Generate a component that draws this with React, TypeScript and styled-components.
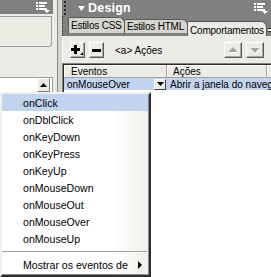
import styled, { createGlobalStyle } from "styled-components";

const GlobalStyle = createGlobalStyle`
  html, body {
    margin: 0;
    padding: 0;
    background: #ecebe5;
  }
`;

const Screen = styled.div`
  position: relative;
  width: 271px;
  height: 277px;
  overflow: hidden;
  display: flex;
  background: #ecebe5;
  font-family: "Liberation Sans", Arial, sans-serif;
  font-size: 10px;
  color: #000;
`;

/* ---------- left panel ---------- */

const LeftPanel = styled.div`
  width: 53px;
  padding-right: 4px;
  display: flex;
  flex-direction: column;
`;

const GrayHeader = styled.div`
  height: 14px;
  background: #808080;
  display: flex;
  align-items: center;
  justify-content: flex-end;
  padding-right: 3px;
  flex-shrink: 0;
`;

const PropBox = styled.div`
  margin-top: 2px;
  width: 51px;
  height: 29px;
  background: #ebeae3;
  border: 1px solid #9d9d9d;
  border-left: none;
  border-radius: 0 0 3px 0;
`;

const ListArea = styled.div`
  margin-top: 30px;
  flex: 1;
  background: #fff;
  border-top: 1px solid #9d9d9d;
  border-right: 1px solid #9d9d9d;
  display: flex;
  justify-content: flex-end;
  align-items: flex-start;
  padding-right: 2px;
`;

const ScrollButton = styled.div`
  width: 13px;
  height: 14px;
  box-sizing: border-box;
  background: #ecebe5;
  border: 1px solid;
  border-color: #fff #808080 #808080 #fff;
  display: flex;
  align-items: center;
  justify-content: center;
`;

const Splitter = styled.div`
  width: 4px;
  border-left: 1px solid #8a8a8a;
  background: #d6d5cf;
`;

/* ---------- right panel ---------- */

const RightPanel = styled.div`
  flex: 1;
  display: flex;
  flex-direction: column;
  min-width: 0;
`;

const DesignHeader = styled.div`
  height: 16px;
  background: #808080;
  display: flex;
  align-items: center;
  padding-right: 3px;
`;

const Grip = styled.div`
  width: 3px;
  height: 14px;
  margin-left: 2px;
  border-left: 2px dotted #2a2a2a;
`;

const Title = styled.div`
  display: flex;
  align-items: center;
  gap: 3px;
  margin-left: 9px;
  flex: 1;
  color: #fff;
  font-weight: bold;
  font-size: 12.5px;
  letter-spacing: 0.2px;
`;

const TabStrip = styled.div`
  height: 20px;
  background: #808080;
  display: flex;
  align-items: flex-start;
  padding-left: 5px;
  border-left: 1px dotted #2a2a2a;
  overflow: hidden;
`;

const Tab = styled.div<{ $top: number; $height: number; $w: number; $active?: boolean }>`
  flex-shrink: 0;
  width: ${({ $w }) => $w}px;
  margin-top: ${({ $top }) => $top}px;
  height: ${({ $height }) => $height}px;
  box-sizing: border-box;
  padding: ${({ $active }) => ($active ? "3px 0 0 2px" : "0 0 0 2px")};
  display: flex;
  align-items: center;
  white-space: nowrap;
  font-size: 10px;
  letter-spacing: -0.2px;
  background: ${({ $active }) => ($active ? "#ecebe5" : "#d5d4cd")};
  border: 1px solid #5a5a5a;
  border-bottom: none;
  border-radius: 2px 6px 0 0;
  margin-right: -1px;
`;

const TabMore = styled.div`
  flex-shrink: 0;
  margin-left: 2px;
  margin-top: 12px;
  width: 5px;
  height: 7px;
  border-top: 1px solid #333;
  border-bottom: 1px solid #333;
  box-shadow: inset 0 2px 0 #ecebe5, inset 0 3px 0 #333;
`;

const Content = styled.div`
  flex: 1;
  display: flex;
  flex-direction: column;
  background: #ecebe5;
  border-left: 1px solid #fff;
`;

const Toolbar = styled.div`
  height: 27px;
  box-sizing: border-box;
  padding: 6px 7px 0 7px;
  display: flex;
  align-items: flex-start;
`;

const ToolButton = styled.div<{ $w?: number; $last?: boolean }>`
  flex-shrink: 0;
  width: ${({ $w }) => $w ?? 15}px;
  height: 16px;
  box-sizing: border-box;
  background: #ecebe5;
  border: 1px solid;
  border-color: #fff #5c5c5c #5c5c5c #fff;
  box-shadow: inset -1px -1px 0 #a6a59e;
  display: flex;
  align-items: center;
  justify-content: center;
  margin-right: ${({ $last }) => ($last ? 0 : 4)}px;
`;

const TagLabel = styled.div`
  margin-left: 7px;
  height: 16px;
  display: flex;
  align-items: center;
  flex: 1;
  font-size: 10px;
`;

const Table = styled.div`
  flex: 1;
  display: flex;
  flex-direction: column;
  background: #fff;
  border-top: 1px solid #808080;
  border-left: 1px solid #808080;
  box-shadow: inset 1px 1px 0 #2b2b2b;
  padding: 1px 0 0 1px;
  margin-left: -1px;
`;

const HeaderRow = styled.div`
  height: 13px;
  display: flex;
  background: #ecebe5;
`;

const HeaderCell = styled.div<{ $w: number }>`
  width: ${({ $w }) => $w}px;
  flex-shrink: 0;
  box-sizing: border-box;
  border-right: 1px solid #a4a39c;
  border-bottom: 1px solid #a4a39c;
  box-shadow: inset 1px 1px 0 #fff;
  padding-left: ${({ $w }) => ($w > 100 ? 7 : 6)}px;
  display: flex;
  align-items: center;
  font-size: 10px;
`;

const EventRow = styled.div`
  height: 12px;
  display: flex;
  background: #c2d3ef;
  font-size: 10px;
`;

const EventCell = styled.div<{ $w?: number }>`
  width: ${({ $w }) => ($w ? `${$w}px` : "auto")};
  flex: ${({ $w }) => ($w ? "none" : "1")};
  min-width: 0;
  box-sizing: border-box;
  padding-left: 3px;
  display: flex;
  align-items: center;
  white-space: nowrap;
  overflow: hidden;
`;

const DropButton = styled.div`
  margin-left: auto;
  margin-right: 1px;
  width: 12px;
  height: 11px;
  box-sizing: border-box;
  background: #ecebe5;
  border: 1px solid;
  border-color: #fff #404040 #404040 #fff;
  display: flex;
  align-items: center;
  justify-content: center;
`;

/* ---------- popup menu ---------- */

const Menu = styled.div`
  position: absolute;
  left: 0;
  top: 92px;
  width: 151px;
  height: 185px;
  box-sizing: border-box;
  background: linear-gradient(to right, #fff 0%, #fff 75%, #f3f3ee 95%);
  border: 2px solid;
  border-color: #f3f2ec #303030 #303030 #f3f2ec;
  box-shadow: inset -1px -1px 0 #8a8a8a;
  display: flex;
  flex-direction: column;
  font-size: 10.6px;
`;

const MenuItem = styled.div<{ $active?: boolean }>`
  height: 17px;
  flex-shrink: 0;
  display: flex;
  align-items: center;
  padding-left: 21px;
  padding-right: 6px;
  margin-right: 1px;
  background: ${({ $active }) => ($active ? "#c2d3ef" : "transparent")};
`;

const Separator = styled.div`
  height: 1px;
  margin: 4px 2px 3px 0;
  background: #a0a0a0;
  border-bottom: 1px solid #fff;
`;

const SubArrow = styled.span`
  margin-left: auto;
  width: 0;
  height: 0;
  border-top: 4px solid transparent;
  border-bottom: 4px solid transparent;
  border-left: 4px solid #000;
`;

const ListIcon = () => (
  <svg width="14" height="11" viewBox="0 0 14 11" fill="#fff">
    <rect x="0" y="0" width="2" height="2" />
    <rect x="3" y="0" width="8" height="2" />
    <rect x="0" y="3" width="2" height="2" />
    <rect x="3" y="3" width="6" height="2" />
    <rect x="0" y="6" width="2" height="2" />
    <rect x="3" y="6" width="8" height="2" />
    <polygon points="8,8 14,8 11,11" />
  </svg>
);

const events = [
  "onClick",
  "onDblClick",
  "onKeyDown",
  "onKeyPress",
  "onKeyUp",
  "onMouseDown",
  "onMouseOut",
  "onMouseOver",
  "onMouseUp",
];

export default function App() {
  return (
    <Screen>
      <GlobalStyle />
      <LeftPanel>
        <GrayHeader>
          <ListIcon />
        </GrayHeader>
        <PropBox />
        <ListArea>
          <ScrollButton>
            <svg width="7" height="4" viewBox="0 0 7 4">
              <polygon points="3.5,0 7,4 0,4" fill="#000" />
            </svg>
          </ScrollButton>
        </ListArea>
      </LeftPanel>
      <Splitter />
      <RightPanel>
        <DesignHeader>
          <Grip />
          <Title>
            <svg width="7" height="5" viewBox="0 0 7 5">
              <polygon points="0,0 7,0 3.5,5" fill="#fff" />
            </svg>
            Design
          </Title>
          <ListIcon />
        </DesignHeader>
        <TabStrip>
          <Tab $top={1} $height={16} $w={57}>
            Estilos CSS
          </Tab>
          <Tab $top={3} $height={14} $w={64}>
            Estilos HTML
          </Tab>
          <Tab $top={5} $height={15} $w={80} $active>
            Comportamentos
          </Tab>
          <TabMore />
        </TabStrip>
        <Content>
          <Toolbar>
            <ToolButton>
              <svg width="13" height="12" viewBox="0 0 13 12">
                <rect x="3" y="1" width="3" height="9" fill="#000" />
                <rect x="0" y="4" width="9" height="3" fill="#000" />
                <polygon points="9,11 12,11 12,8" fill="#000" />
              </svg>
            </ToolButton>
            <ToolButton>
              <svg width="9" height="3" viewBox="0 0 9 3">
                <rect x="0" y="0" width="9" height="3" fill="#000" />
              </svg>
            </ToolButton>
            <TagLabel>&lt;a&gt; Ações</TagLabel>
            <ToolButton $w={18}>
              <svg width="11" height="7" viewBox="0 0 11 7">
                <polygon points="5.5,1 10,6 1,6" fill="#fff" />
                <polygon points="5,0 9.5,5 0.5,5" fill="#a5a49d" />
              </svg>
            </ToolButton>
            <ToolButton $w={18} $last>
              <svg width="11" height="7" viewBox="0 0 11 7">
                <polygon points="1,2 10,2 5.5,7" fill="#fff" />
                <polygon points="0.5,1 9.5,1 5,6" fill="#a5a49d" />
              </svg>
            </ToolButton>
          </Toolbar>
          <Table>
            <HeaderRow>
              <HeaderCell $w={103}>Eventos</HeaderCell>
              <HeaderCell $w={100}>Ações</HeaderCell>
              <HeaderCell $w={20} />
            </HeaderRow>
            <EventRow>
              <EventCell $w={103}>
                onMouseOver
                <DropButton>
                  <svg width="7" height="4" viewBox="0 0 7 4">
                    <polygon points="0,0 7,0 3.5,4" fill="#000" />
                  </svg>
                </DropButton>
              </EventCell>
              <EventCell>Abrir a janela do navega</EventCell>
            </EventRow>
          </Table>
        </Content>
      </RightPanel>
      <Menu>
        {events.map((e, i) => (
          <MenuItem key={e} $active={i === 0}>
            {e}
          </MenuItem>
        ))}
        <Separator />
        <MenuItem>
          Mostrar os eventos de
          <SubArrow />
        </MenuItem>
      </Menu>
    </Screen>
  );
}
